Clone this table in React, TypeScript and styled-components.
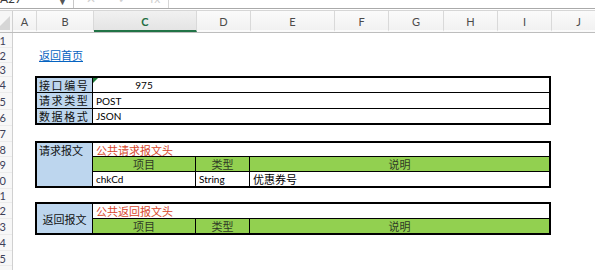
import styled, { createGlobalStyle } from "styled-components";

const GlobalStyle = createGlobalStyle`
  html, body {
    margin: 0;
    padding: 0;
    background: #ffffff;
    overflow: hidden;
  }
  body {
    font-family: "Lato", "Noto Sans CJK SC", sans-serif;
  }
`;

const COLUMNS = [
  { name: "A", width: 24 },
  { name: "B", width: 57 },
  { name: "C", width: 103 },
  { name: "D", width: 54 },
  { name: "E", width: 84 },
  { name: "F", width: 54 },
  { name: "G", width: 55 },
  { name: "H", width: 54 },
  { name: "I", width: 54 },
  { name: "J", width: 54 },
];

const ROW_HEIGHTS = [15, 15, 14, 16, 17, 16, 16, 15, 16, 16, 14, 16, 16, 16, 15, 15];

const Sheet = styled.div`
  width: 595px;
  height: 270px;
  overflow: hidden;
  display: flex;
  flex-direction: column;
`;

const Toolbar = styled.div`
  flex: none;
  display: flex;
  height: 8px;
  border-bottom: 1px solid #aaaaaa;
  margin-bottom: 1px;
  overflow: hidden;
`;

const NameBox = styled.div`
  width: 74px;
  box-sizing: border-box;
  display: flex;
  justify-content: space-between;
  align-items: flex-end;
  padding-right: 6px;
  border-right: 1px solid #c8c8c8;
  font: 12px/18px "Lato", sans-serif;
  color: #3a3a3a;
  .caret {
    font-size: 9px;
    line-height: 12px;
    color: #555;
  }
`;

const FormulaTools = styled.div`
  width: 95px;
  box-sizing: border-box;
  display: flex;
  align-items: flex-end;
  gap: 22px;
  padding-left: 12px;
  border-right: 1px solid #d6d6d6;
  font: 12px/18px "Lato", sans-serif;
  color: #d0d0d0;
`;

const HeaderRow = styled.div`
  flex: none;
  display: flex;
  height: 23px;
  box-sizing: border-box;
  border-top: 1px solid #d6d6d6;
  border-bottom: 1px solid #bdbdbd;
`;

const Corner = styled.div`
  width: 13px;
  flex: none;
  box-sizing: border-box;
  border-right: 1px solid #d0d0d0;
  background: #f6f6f6;
  overflow: hidden;
`;

const ColHead = styled.div<{ $w: number; $active?: boolean }>`
  width: ${(p) => p.$w}px;
  flex: none;
  box-sizing: border-box;
  display: flex;
  align-items: center;
  justify-content: center;
  border-right: 1px solid #d9d9d9;
  border-bottom: 2px solid ${(p) => (p.$active ? "#217346" : "transparent")};
  background: ${(p) =>
    p.$active
      ? "linear-gradient(#f1f1f1, #e4e4e4)"
      : "linear-gradient(#fbfbfb, #f1f1f1)"};
  font: ${(p) => (p.$active ? 700 : 400)} 11px "Lato", sans-serif;
  color: ${(p) => (p.$active ? "#1f6e43" : "#4a4a4a")};
  padding-top: 2px;
`;

const Body = styled.div`
  flex: 1;
  min-height: 0;
  display: flex;
  overflow: hidden;
`;

const RowHeads = styled.div`
  width: 13px;
  flex: none;
  box-sizing: border-box;
  border-right: 1px solid #d0d0d0;
  background: #f7f7f7;
  overflow: hidden;
`;

const RowHead = styled.div<{ $h: number }>`
  height: ${(p) => p.$h}px;
  box-sizing: border-box;
  display: flex;
  justify-content: flex-end;
  align-items: center;
  padding-right: 6px;
  border-bottom: 1px solid #ebebeb;
  white-space: nowrap;
  font: 11px "Lato", sans-serif;
  color: #3c4058;
`;

const Canvas = styled.div`
  flex: 1;
  display: flex;
  flex-direction: column;
  padding-top: 11px;
`;

const LinkRow = styled.div`
  height: 14px;
  padding-left: 26px;
  a {
    font: 11px/14px "Noto Sans CJK SC", sans-serif;
    color: #0563c1;
    text-decoration: underline;
  }
`;

const Table = styled.div<{ $rows: string; $top: number }>`
  display: grid;
  grid-template-columns: 55px 102px 53px 1fr;
  grid-template-rows: ${(p) => p.$rows};
  gap: 1px;
  width: 516px;
  box-sizing: border-box;
  margin: ${(p) => p.$top}px 0 0 22px;
  border: 2px solid #000;
  background: #000;
`;

const LabelCell = styled.div<{ $rows?: number; $center?: boolean; $wide?: boolean }>`
  grid-row: span ${(p) => p.$rows ?? 1};
  display: flex;
  align-items: ${(p) => (p.$center ? "center" : "flex-start")};
  justify-content: ${(p) => (p.$center ? "center" : "flex-start")};
  padding-left: ${(p) => (p.$center ? 0 : 2)}px;
  background: #bdd6ee;
  font: 11px/14px "Noto Sans CJK SC", sans-serif;
  letter-spacing: ${(p) => (p.$wide ? "1.6px" : "0")};
  color: #111;
  white-space: nowrap;
  overflow: hidden;
`;

const ValueCell = styled.div<{ $span?: number; $mark?: boolean }>`
  grid-column: span ${(p) => p.$span ?? 1};
  position: relative;
  display: flex;
  align-items: center;
  padding-left: 3px;
  background: #fff;
  font: 10px "Lato", "Noto Sans CJK SC", sans-serif;
  color: #000;
  white-space: nowrap;
  overflow: hidden;
  &::before {
    content: "";
    display: ${(p) => (p.$mark ? "block" : "none")};
    position: absolute;
    left: 0;
    top: 0;
    border-top: 5px solid #1e7b3a;
    border-right: 5px solid transparent;
  }
`;

/* number centred within column C while the cell itself is merged across C:I */
const CentredNumber = styled.span`
  width: 102px;
  margin-left: -3px;
  text-align: center;
`;

const CjkText = styled.span`
  font: 11px "Noto Sans CJK SC", sans-serif;
`;

const TitleCell = styled.div`
  grid-column: span 3;
  display: flex;
  align-items: center;
  padding-left: 3px;
  background: #fff;
  font: 11px "Noto Sans CJK SC", sans-serif;
  color: #d8472c;
`;

const HeadCell = styled.div`
  display: flex;
  align-items: center;
  justify-content: center;
  background: #92d050;
  font: 11px "Noto Sans CJK SC", sans-serif;
  color: #2f3a25;
`;

function FieldHeads() {
  return (
    <>
      <HeadCell>项目</HeadCell>
      <HeadCell>类型</HeadCell>
      <HeadCell>说明</HeadCell>
    </>
  );
}

export default function App() {
  return (
    <Sheet>
      <GlobalStyle />
      <Toolbar>
        <NameBox>
          <span>A27</span>
          <span className="caret">▼</span>
        </NameBox>
        <FormulaTools>
          <span>✕</span>
          <span>✓</span>
          <span>fx</span>
        </FormulaTools>
      </Toolbar>

      <HeaderRow>
        <Corner>
          <svg width="13" height="21" viewBox="0 0 13 21">
            <polygon points="10,5 10,19 -4,19" fill="#d6d6d6" />
          </svg>
        </Corner>
        {COLUMNS.map((col) => (
          <ColHead key={col.name} $w={col.width} $active={col.name === "C"}>
            {col.name}
          </ColHead>
        ))}
      </HeaderRow>

      <Body>
        <RowHeads>
          {ROW_HEIGHTS.map((h, i) => (
            <RowHead key={i} $h={h}>
              {i + 1}
            </RowHead>
          ))}
        </RowHeads>

        <Canvas>
          <LinkRow>
            <a href="#">返回首页</a>
          </LinkRow>

          <Table $rows="14px 15px 14px" $top={18}>
            <LabelCell $wide>接口编号</LabelCell>
            <ValueCell $span={3} $mark>
              <CentredNumber>975</CentredNumber>
            </ValueCell>
            <LabelCell $wide>请求类型</LabelCell>
            <ValueCell $span={3}>POST</ValueCell>
            <LabelCell $wide>数据格式</LabelCell>
            <ValueCell $span={3}>JSON</ValueCell>
          </Table>

          <Table $rows="13px 14px 14px" $top={16}>
            <LabelCell $rows={3}>请求报文</LabelCell>
            <TitleCell>公共请求报文头</TitleCell>
            <FieldHeads />
            <ValueCell>chkCd</ValueCell>
            <ValueCell>String</ValueCell>
            <ValueCell>
              <CjkText>优惠券号</CjkText>
            </ValueCell>
          </Table>

          <Table $rows="14px 14px" $top={14}>
            <LabelCell $rows={2} $center>
              返回报文
            </LabelCell>
            <TitleCell>公共返回报文头</TitleCell>
            <FieldHeads />
          </Table>
        </Canvas>
      </Body>
    </Sheet>
  );
}
